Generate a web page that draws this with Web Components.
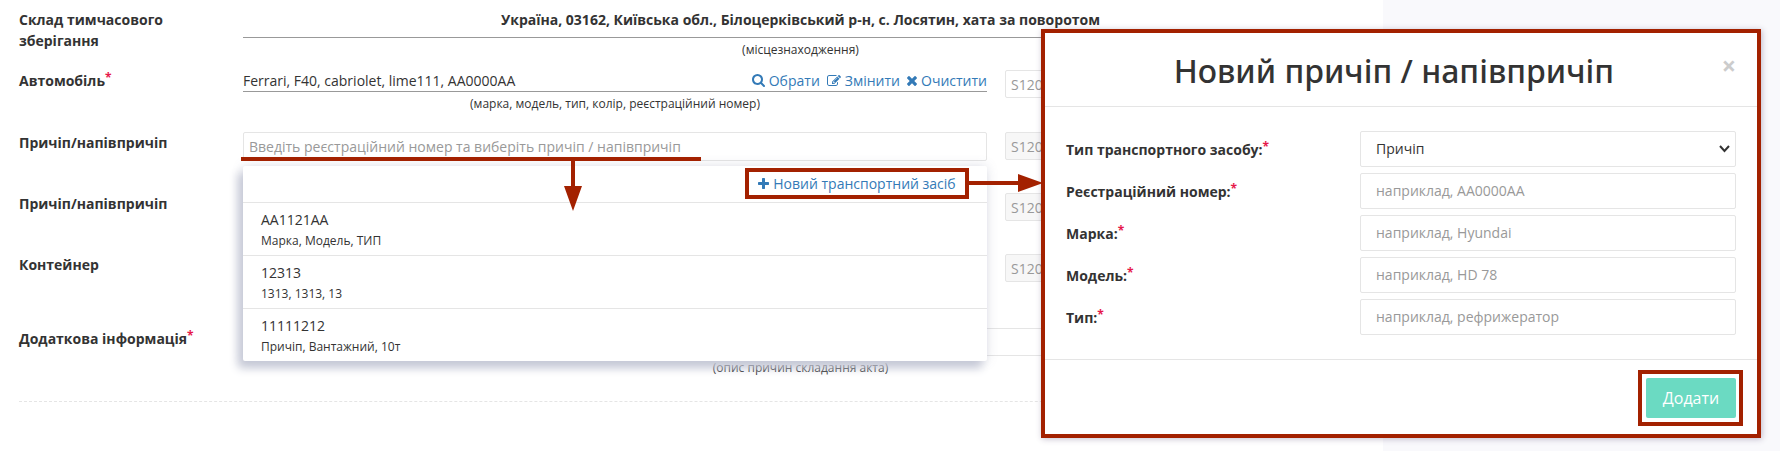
<!DOCTYPE html>
<html lang="uk">
<head>
<meta charset="utf-8">
<title>Транспортні засоби</title>
<style>
  body {
    margin: 0;
    min-height: 100vh;
    background: #f9f9fc;
    color: #333;
    font: 14px/21px "Open Sans", "Noto Sans", sans-serif;
    overflow: hidden;
  }
</style>
</head>
<body>
<app-page>
  <act-form></act-form>
  <vehicle-dialog slot="dialog" heading="Новий причіп / напівпричіп">
    <dialog-field label="Тип транспортного засобу:" options="Причіп,Напівпричіп"></dialog-field>
    <dialog-field label="Реєстраційний номер:" hint="наприклад, АА0000АА"></dialog-field>
    <dialog-field label="Марка:" hint="наприклад, Hyundai"></dialog-field>
    <dialog-field label="Модель:" hint="наприклад, HD 78"></dialog-field>
    <dialog-field label="Тип:" hint="наприклад, рефрижератор"></dialog-field>
  </vehicle-dialog>
</app-page>

<script>
const define = (name, html, setup) => {
  const template = document.createElement('template');
  template.innerHTML = html;
  customElements.define(name, class extends HTMLElement {
    constructor() {
      super();
      this.attachShadow({ mode: 'open' }).append(template.content.cloneNode(true));
    }
    connectedCallback() {
      if (setup && !this.ready) { this.ready = true; setup(this, this.shadowRoot); }
    }
  });
};

const ICONS = {
  search: ['0 0 1664 1664', 'M1152 704q0-185-131.500-316.500T704 256 387.500 387.500 256 704t131.500 316.500T704 1152t316.500-131.500T1152 704zm512 832q0 52-38 90t-90 38q-54 0-90-38l-343-342q-179 124-399 124-143 0-273.500-55.500t-225-150-150-225T0 704t55.500-273.500 150-225 225-150T704 0t273.500 55.500 225 150 150 225T1408 704q0 220-124 399l343 343q37 37 37 90z'],
  edit: ['0 0 1792 1664', 'M888 1184l116-116-152-152-116 116v56h96v96h56zm440-720q-16-16-33 1L945 815q-17 17-1 33t33-1l350-350q17-17 1-33zm80 594v190q0 119-84.500 203.500T1120 1536H288q-119 0-203.500-84.500T0 1248V416q0-119 84.500-203.500T288 128h832q63 0 117 25 15 7 18 23 3 17-9 29l-49 49q-14 14-32 8-23-6-45-6H288q-66 0-113 47t-47 113v832q0 66 47 113t113 47h832q66 0 113-47t47-113v-126q0-13 9-22l64-64q15-15 35-7t20 29zm-96-738l288 288-672 672H640V992zm444 132l-92 92-288-288 92-92q28-28 68-28t68 28l152 152q28 28 28 68t-28 68z'],
  clear: ['0 0 1188 1188', 'M1188 956q0 40-28 68l-136 136q-28 28-68 28t-68-28L594 866l-294 294q-28 28-68 28t-68-28L28 1024Q0 996 0 956t28-68l294-294L28 300Q0 272 0 232t28-68L164 28q28-28 68-28t68 28l294 294L888 28q28-28 68-28t68 28l136 136q28 28 28 68t-28 68L866 594l294 294q28 28 28 68z'],
  plus: ['0 0 1408 1408', 'M1408 608v192q0 40-28 68t-68 28H896v416q0 40-28 68t-68 28H608q-40 0-68-28t-28-68V896H96q-40 0-68-28T0 800V608q0-40 28-68t68-28h416V96q0-40 28-68t68-28h192q40 0 68 28t28 68v416h416q40 0 68 28t28 68z']
};

define('ui-icon', `
  <style>
    :host { display: inline-block; width: var(--icon-size, 13px); }
    svg { display: block; width: 100%; fill: currentColor; }
  </style>
  <svg aria-hidden="true"><path/></svg>`,
  (host, root) => {
    const [box, path] = ICONS[host.getAttribute('name')];
    root.querySelector('svg').setAttribute('viewBox', box);
    root.querySelector('path').setAttribute('d', path);
  });

define('app-page', `
  <style>
    :host { display: block; position: relative; min-height: 100vh; }
    main { box-sizing: border-box; min-height: 100vh; margin-right: 397px; padding: 9px 25px 0 19px; background: #fff; }
    slot[name=dialog] { display: block; position: absolute; top: 29px; right: 19px; width: 720px; }
  </style>
  <main><slot></slot></main>
  <slot name="dialog"></slot>`);

/* Pointer drawn between an annotated control and what it opens */
define('callout-arrow', `
  <style>
    :host { display: block; position: absolute; width: 72px; height: 18px; }
    :host([direction=down]) { width: 18px; height: 50px; }
    svg { display: none; fill: #a32100; }
    :host([direction=down]) .down, :host([direction=right]) .right { display: block; }
  </style>
  <svg class="down" width="18" height="50" aria-hidden="true"><path d="M7 0h4v25h7L9 50 0 25h7z"/></svg>
  <svg class="right" width="74" height="18" aria-hidden="true"><path d="M0 7h49V0l25 9-25 9v-7H0z"/></svg>`);

define('vehicle-suggestion', `
  <style>
    :host { display: block; padding: 6px 18px 5px; border-top: 1px solid #e5e5e5; }
    small { display: block; margin-top: 2px; font-size: 12px; line-height: 18px; }
  </style>
  <slot></slot><small><slot name="details"></slot></small>`);

define('suggestion-list', `
  <style>
    :host {
      display: block; position: absolute; z-index: 1; top: 34px; left: 0; right: 0;
      background: #fff; border-radius: 2px;
      box-shadow: -5px 7px 10px #c5c8d6, 0 0 12px rgba(100, 105, 140, .2);
    }
    header { display: flex; justify-content: flex-end; padding: 2px 18px 3px; }
    .marked { position: relative; box-sizing: border-box; display: flex; justify-content: center; min-width: 224px; padding: 1px 6px; border: 4px solid #a32100; }
    a { display: flex; align-items: center; gap: 4px; color: #337ab7; text-decoration: none; }
    ui-icon { --icon-size: 11px; }
    callout-arrow { top: 2px; left: calc(100% + 4px); }
  </style>
  <header>
    <div class="marked"><a href="#new"><ui-icon name="plus"></ui-icon>Новий транспортний засіб</a><callout-arrow direction="right"></callout-arrow></div>
  </header>
  <slot></slot>`);

define('act-form', `
  <style>
    :host { display: block; border-bottom: 1px dashed #e5e5e5; }
    .row { display: grid; grid-template-columns: 206px minmax(0, 744fr) minmax(0, 353fr); column-gap: 18px; align-items: start; min-height: 61px; }
    .car { min-height: 62px; }
    .last { margin-top: 13px; min-height: 73px; }
    .wide { grid-column: 2 / -1; }
    .name { font-weight: 700; }
    .short { max-width: 160px; }
    sup { color: #e6194b; font-size: 12px; line-height: 0; vertical-align: 4px; }
    .value { display: flex; justify-content: space-between; height: 21px; border-bottom: 1px solid #999; }
    .value.main { justify-content: center; height: 28px; font-weight: 700; }
    nav { display: flex; gap: 7px; }
    a { display: flex; align-items: center; gap: 4px; color: #337ab7; text-decoration: none; }
    .caption { padding-top: 3px; text-align: center; font-size: 12px; line-height: 18px; }
    input { box-sizing: border-box; display: block; width: 100%; height: 28px; padding: 0 5px; border: 1px solid #e5e5e5; border-radius: 2px; background: #fff; color: #333; font: inherit; }
    input:disabled { background: #f7f7f7; }
    input::placeholder { color: #999; opacity: 1; }
    .search { position: relative; }
    .search input { height: 29px; }
    .underline { position: absolute; z-index: 2; top: 25px; left: -2px; width: 460px; height: 4px; background: #a32100; }
    .search callout-arrow { z-index: 2; top: 29px; left: 321px; }
  </style>
  <div class="row">
    <div class="name short">Склад тимчасового зберігання</div>
    <div class="wide">
      <div class="value main">Україна, 03162, Київська обл., Білоцерківський р-н, с. Лосятин, хата за поворотом</div>
      <div class="caption">(місцезнаходження)</div>
    </div>
  </div>
  <div class="row car">
    <label class="name" for="car">Автомобіль<sup>*</sup></label>
    <div>
      <div class="value">
        <span>Ferrari, F40, cabriolet, lime111, AA0000AA</span>
        <nav>
          <a href="#choose"><ui-icon name="search"></ui-icon>Обрати</a>
          <a href="#edit"><ui-icon name="edit" style="--icon-size:14px"></ui-icon>Змінити</a>
          <a href="#clear"><ui-icon name="clear" style="--icon-size:10px"></ui-icon>Очистити</a>
        </nav>
      </div>
      <div class="caption">(марка, модель, тип, колір, реєстраційний номер)</div>
    </div>
    <input id="car" placeholder="S120">
  </div>
  <div class="row">
    <label class="name" for="trailer">Причіп/напівпричіп</label>
    <div class="search">
      <input id="trailer" placeholder="Введіть реєстраційний номер та виберіть причіп / напівпричіп">
      <suggestion-list>
        <vehicle-suggestion>АА1121АА<span slot="details">Марка, Модель, ТИП</span></vehicle-suggestion>
        <vehicle-suggestion>12313<span slot="details">1313, 1313, 13</span></vehicle-suggestion>
        <vehicle-suggestion>11111212<span slot="details">Причіп, Вантажний, 10т</span></vehicle-suggestion>
      </suggestion-list>
      <div class="underline"></div>
      <callout-arrow direction="down"></callout-arrow>
    </div>
    <input aria-label="Пломба причепа" placeholder="S120" disabled>
  </div>
  <div class="row">
    <label class="name" for="trailer2">Причіп/напівпричіп</label>
    <input id="trailer2">
    <input aria-label="Пломба другого причепа" placeholder="S120" disabled>
  </div>
  <div class="row">
    <label class="name" for="container">Контейнер</label>
    <input id="container">
    <input aria-label="Пломба контейнера" placeholder="S120" disabled>
  </div>
  <div class="row last">
    <label class="name" for="extra">Додаткова інформація<sup>*</sup></label>
    <div class="wide">
      <input id="extra">
      <div class="caption">(опис причин складання акта)</div>
    </div>
  </div>`);

define('dialog-field', `
  <style>
    :host { display: grid; grid-template-columns: minmax(0, 279fr) minmax(0, 376fr); column-gap: 15px; align-items: center; }
    label { font-weight: 700; }
    sup { color: #e6194b; font-size: 12px; line-height: 0; vertical-align: 4px; }
    input, .choice { grid-column: 2; }
    input, select { box-sizing: border-box; width: 100%; height: 36px; padding: 0 15px 2px; border: 1px solid #e5e5e5; border-radius: 2px; background: #fff; color: #333; font: inherit; appearance: none; }
    input::placeholder { color: #999; opacity: 1; }
    .choice { display: grid; align-items: center; }
    .choice > * { grid-area: 1 / 1; }
    svg { justify-self: end; margin-right: 6px; pointer-events: none; fill: none; stroke: #333; stroke-width: 2; }
  </style>
  <label for="control"><span></span><sup>*</sup></label>`,
  (host, root) => {
    root.querySelector('span').textContent = host.getAttribute('label');
    const options = host.getAttribute('options');
    const body = document.createElement('template');
    body.innerHTML = options
      ? '<div class="choice"><select id="control">' + options.split(',').map(o => '<option>' + o + '</option>').join('') +
        '</select><svg width="11" height="8" aria-hidden="true"><path d="M1 1l4.500 5L10 1"/></svg></div>'
      : '<input id="control" placeholder="' + host.getAttribute('hint') + '">';
    root.append(body.content);
  });

define('vehicle-dialog', `
  <style>
    :host { display: block; }
    section { border: 4px solid #a32100; background: #fff; box-shadow: 1px 1px 6px rgba(60, 40, 90, .3); }
    header { display: flex; align-items: flex-start; padding: 16px 21px 13px; border-bottom: 1px solid #e5e5e5; }
    h2 { flex: 1; margin: 0; text-align: center; font: 500 32px/44px "Noto Sans", "Open Sans", sans-serif; }
    .close { margin-top: 6px; padding: 0; border: 0; background: none; color: #ccc; font: 700 25px/21px "Open Sans", "Noto Sans", sans-serif; }
    .fields { display: grid; gap: 6px; padding: 24px 21px; }
    footer { display: flex; justify-content: flex-end; padding: 10px 14px 8px; border-top: 1px solid #e5e5e5; }
    .marked { padding: 4px 3px 4px 4px; border: 4px solid #a32100; }
    .add { display: block; width: 90px; height: 40px; padding: 0; border: 0; border-radius: 2px; background: #6bdac2; color: #fff; font: 16px/24px "Open Sans", "Noto Sans", sans-serif; }
  </style>
  <section role="dialog" aria-labelledby="title">
    <header><h2 id="title"></h2><button class="close" aria-label="Закрити">×</button></header>
    <div class="fields"><slot></slot></div>
    <footer><div class="marked"><button class="add">Додати</button></div></footer>
  </section>`,
  (host, root) => { root.querySelector('h2').textContent = host.getAttribute('heading'); });
</script>
</body>
</html>
